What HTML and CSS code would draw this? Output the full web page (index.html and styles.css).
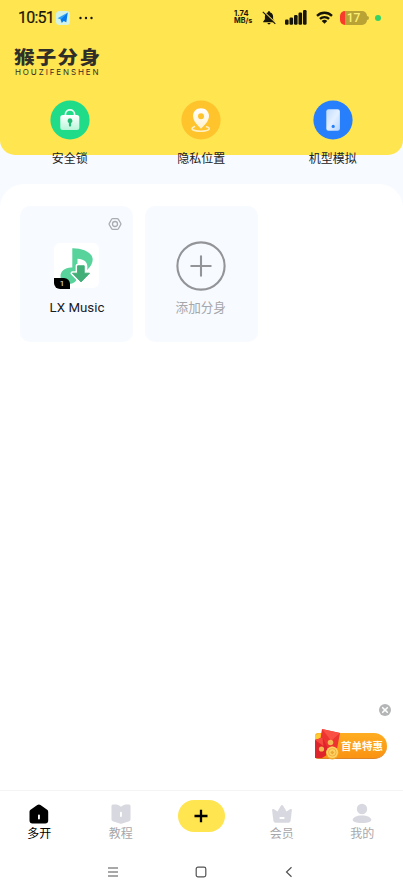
FILE: index.html
```html
<!DOCTYPE html>
<html lang="zh-CN">
<head>
<meta charset="utf-8">
<meta name="viewport" content="width=device-width, initial-scale=1">
<title>猴子分身</title>
<link rel="stylesheet" href="styles.css">
</head>
<body>
<div class="app">
  <header class="hero">
    <div class="status">
      <span class="time">10:51</span>
      <svg class="plane" width="14" height="14" viewBox="0 0 14 14"><rect width="14" height="14" rx="3.5" fill="#d3f3e6"/><path d="M11.800 1.500 1.500 7.200l3.700 1.200z" fill="#29a4fa"/><path d="M11.800 1.500 4.500 8.400l1.300 3.600 1.800-2 2.700 1.200z" fill="#087bec"/></svg>
      <svg class="dots" width="14" height="4" viewBox="0 0 14 4"><circle cx="1.500" cy="2" r="1.200"/><circle cx="7" cy="2" r="1.200"/><circle cx="12.500" cy="2" r="1.200"/></svg>
      <span class="speed"><span>1.74</span><span>MB/s</span></span>
      <svg class="bell" width="14" height="16" viewBox="0 0 14 16"><path d="M7 1.200c.8 0 1.200.5 1.200 1.200 2 .5 2.900 2.100 2.900 4.200v2.600l1.700 2.300v.8H1.200v-.8l1.700-2.300V6.600c0-2.100.9-3.700 2.900-4.200 0-.7.4-1.200 1.200-1.200zM5.500 13h3c-.2 1-.7 1.400-1.500 1.400S5.700 14 5.500 13z"/><path d="M1.600 1.400 13.900 13.200" stroke="#ffe550" stroke-width="1.200"/><path d="M.8 1.800 13.300 13.800" stroke="#17150a" stroke-width="1.100"/></svg>
      <svg class="signal" width="22" height="15" viewBox="0 0 22 15"><rect x="0" y="9.500" width="3.600" height="5.200" rx="1.200"/><rect x="4.500" y="7.500" width="3.600" height="7.200" rx="1.200"/><rect x="9" y="5" width="3.600" height="9.700" rx="1.200"/><rect x="13.500" y="2.500" width="3.600" height="12.200" rx="1.200"/><rect x="18" y="0" width="3.600" height="14.700" rx="1.200"/></svg>
      <svg class="wifi" width="17" height="13" viewBox="0 0 17 13"><g fill="none" stroke="#17150a" stroke-width="2.300"><path d="M1 4.900c4.300-4.200 10.700-4.200 15 0"/><path d="M3.900 7.900c2.600-2.500 6.600-2.500 9.200 0"/></g><path d="M5.700 9.900c1.700-1.500 3.900-1.500 5.600 0L8.500 12.800z"/></svg>
      <span class="battery"><span class="level">17</span></span>
      <span class="live"></span>
    </div>
    <div class="brand">
      <span class="brand-cn">猴子分身</span>
      <span class="brand-en">HOUZIFENSHEN</span>
    </div>
    <div class="services">
      <div class="service">
        <svg width="40" height="40" viewBox="0 0 40 40"><defs><linearGradient id="lock" x2="0" y2="1"><stop stop-color="#fff"/><stop offset="1" stop-color="#b8f5da"/></linearGradient></defs><circle cx="20" cy="20" r="19.600" fill="#20dc88"/><path d="M15.400 16v-1.600c0-6 9.200-6 9.200 0V16" fill="none" stroke="#e8fff4" stroke-width="1.700"/><rect x="10.300" y="15" width="19" height="15" rx="2.500" fill="url(#lock)"/><path d="M20 18.200a2.500 2.500 0 0 1 1.100 4.700v2.700a1.100 1.100 0 0 1-2.200 0v-2.700a2.500 2.500 0 0 1 1.100-4.700z" fill="#20bc75"/></svg>
        <span>安全锁</span>
      </div>
      <div class="service">
        <svg width="40" height="40" viewBox="0 0 40 40"><defs><linearGradient id="pin" x2="0" y2="1"><stop stop-color="#fff"/><stop offset="1" stop-color="#fff2ce"/></linearGradient></defs><circle cx="20" cy="20" r="19.600" fill="#ffc32c"/><path d="M13.500 26.500c-6 3 0 4.700 6.500 4.700 7 0 11.500-2.800 5.500-4.500" fill="none" stroke="#fff0c4" stroke-width="1.600" stroke-linecap="round"/><path fill-rule="evenodd" d="M20 8.200c4.800 0 8 3.500 8 7.800 0 5.400-5.200 9.800-8 12.800-2.800-3-8-7.400-8-12.800 0-4.300 3.200-7.800 8-7.800zm0 5a3 3 0 1 0 0 6 3 3 0 0 0 0-6z" fill="url(#pin)"/></svg>
        <span>隐私位置</span>
      </div>
      <div class="service">
        <svg width="40" height="40" viewBox="0 0 40 40"><defs><linearGradient id="phone" x2="1" y2="1"><stop stop-color="#bfdbff"/><stop offset=".5" stop-color="#e4f0ff"/><stop offset="1" stop-color="#b6d5ff"/></linearGradient></defs><circle cx="20" cy="20" r="19.600" fill="#277ffb"/><rect x="13.300" y="9.300" width="13.600" height="21.500" rx="2.300" fill="url(#phone)"/><circle cx="20.200" cy="26.400" r="1.600" fill="#277ffb"/></svg>
        <span>机型模拟</span>
      </div>
    </div>
  </header>

  <main class="sheet">
    <div class="cards">
      <div class="card">
        <svg class="gear" width="14" height="14" viewBox="0 0 14 14" fill="none" stroke="#a9adb1" stroke-linejoin="round"><path d="M4.800 1.600h4.400c.6 0 .9.200 1.200.7L12.700 6.300c.3.500.3.900 0 1.400l-2.300 4c-.3.500-.6.700-1.200.7H4.800c-.6 0-.9-.2-1.200-.7L1.300 7.700c-.3-.5-.3-.9 0-1.400l2.300-4c.3-.5.6-.7 1.200-.7z" stroke-width="1.300"/><circle cx="7" cy="7" r="2.500" stroke-width="1.300"/></svg>
        <div class="app-icon">
          <svg width="45" height="45" viewBox="0 0 45 45"><path d="M18.300 5.200C28 5 37.500 8.800 38.600 15.500c.5 4-1.600 7.500-5.600 11.500 1.500-6.500-1.500-11-9.500-11.200V33c0 5-4 8-8.800 8-4.700 0-8.200-3.200-8.200-7.700 0-5.500 5-9.300 11.800-8.800z" fill="#57d39b"/><path d="M23.600 22.800h6.600v7.400h5.300L27 38.900l-8.500-8.700h5.100z" fill="#42ae78" stroke="#fff" stroke-width="4" stroke-linejoin="round"/><path d="M23.600 22.800h6.600v7.400h5.300L27 38.900l-8.500-8.700h5.100z" fill="#42ae78" stroke="#42ae78" stroke-linejoin="round"/></svg>
          <span class="count">1</span>
        </div>
        <span class="app-name">LX Music</span>
      </div>
      <div class="card add">
        <svg width="50" height="50" viewBox="0 0 50 50" fill="none" stroke="#939497" stroke-width="2.100" stroke-linecap="round"><circle cx="25" cy="25" r="23.600"/><path d="M15.300 25h19.400M25 15.300v19.400"/></svg>
        <span>添加分身</span>
      </div>
    </div>
    <div class="promo">
      <svg class="close" width="12" height="12" viewBox="0 0 12 12"><circle cx="6" cy="6" r="6" fill="#b4b5b6"/><path d="m3.700 3.700 4.600 4.600m0-4.600L3.700 8.300" stroke="#fff" stroke-width="1.600" stroke-linecap="round"/></svg>
      <div class="offer">
        <svg class="packets" width="28" height="30" viewBox="0 0 28 30"><path d="M0 6.500 4.500 4 8 10H0z" fill="#fc3"/><path d="m7 0 18 4-3.500 18.500L4 18z" fill="#ed3430"/><path d="m7 0 18 4-8.800 7.800z" fill="#fa5043"/><path d="m0 11 7.500-2.500L15 24l-8 5H0z" fill="#df242b"/><path d="m0 11 7.500-2.500L8.500 17z" fill="#f64a3f"/><circle cx="15.500" cy="13.500" r="2.800" fill="#f3b851"/><circle cx="6.500" cy="20" r="2.600" fill="#f3b851"/><circle cx="17.300" cy="24" r="6.400" fill="#efa629"/><circle cx="17.300" cy="23.300" r="5.800" fill="#ffd263"/><circle cx="17.300" cy="23.300" r="3.800" fill="none" stroke="#eda733" stroke-width=".8"/><path d="m15.300 23.500 2-2 2 2-2 2z" fill="#eda733"/></svg>
        <span>首单特惠</span>
      </div>
    </div>
  </main>

  <nav class="tabs">
    <div class="tab active">
      <svg width="20" height="20" viewBox="0 0 20 20"><path d="M8.300 1.100c1-.7 2.200-.7 3.200 0L17.800 5.500c1 .7 1.400 1.400 1.400 2.500v8.400c0 2-1 3-3 3H3.500c-2 0-3-1-3-3V8c0-1.100.4-1.800 1.400-2.500z"/><rect x="9" y="10.500" width="1.900" height="4.900" rx=".9" fill="#fff"/></svg>
      <span>多开</span>
    </div>
    <div class="tab">
      <svg width="20" height="20" viewBox="0 0 20 20"><path d="M2 .6c2.600-.4 5.800 0 8 2.100C12.200.6 15.400.2 18 .6c1 .1 1.500.7 1.500 1.700v13c0 1-.4 1.500-1.300 1.900l-7 2.200c-.8.300-1.600.3-2.400 0l-7-2.200C.9 16.800.5 16.300.5 15.300v-13C.5 1.300 1 .7 2 .6z"/><rect x="9" y="7.800" width="1.900" height="5.200" rx=".9" fill="#fff"/></svg>
      <span>教程</span>
    </div>
    <div class="tab-plus"><svg width="14" height="14" viewBox="0 0 14 14"><path d="M7 .7v12.600M.5 7h13" stroke="#000" stroke-width="2.300"/></svg></div>
    <div class="tab">
      <svg width="20" height="20" viewBox="0 0 20 20"><path d="M.1 6.200c0-1.300 1-1.600 1.900-1L5.500 7.400 9 1.600c.5-.9 1.500-.9 2 0l3.500 5.800L18 5.200c.9-.6 2-.3 1.900 1L18.600 16.800c-.2 1.100-.8 1.900-2 1.900H3.400c-1.200 0-1.800-.8-2-1.900z"/><rect x="7.400" y="13" width="5.200" height="1.900" rx=".9" fill="#fff"/></svg>
      <span>会员</span>
    </div>
    <div class="tab">
      <svg width="20" height="20" viewBox="0 0 20 20"><circle cx="10" cy="5" r="5.200"/><path d="M10 11.500c5.400 0 9.300 2 9.300 4.300 0 2-3 3.200-9.300 3.200s-9.300-1.200-9.300-3.200c0-2.300 3.900-4.300 9.300-4.300z"/></svg>
      <span>我的</span>
    </div>
  </nav>
  <div class="system">
    <svg width="12" height="12" viewBox="0 0 12 12"><path d="M1 2h10M1 6h10M1 10h10"/></svg>
    <svg width="12" height="12" viewBox="0 0 12 12"><rect x="1.200" y="1.200" width="9.600" height="9.600" rx="1.800"/></svg>
    <svg width="12" height="12" viewBox="0 0 12 12"><path d="M8.500 1.200 3.500 6l5 4.800"/></svg>
  </div>
</div>
</body>
</html>
```
FILE: styles.css
```css
* { box-sizing: border-box; }
body { margin: 0; font-family: Roboto, "Noto Sans CJK SC", sans-serif; }
svg { display: block; flex: none; overflow: visible; }
.app { height: 884px; display: flex; flex-direction: column; overflow: hidden; background: #f7faff; }

.hero { height: 155px; flex: none; background: #ffe550; border-radius: 0 0 15px 15px; }
.status { display: flex; align-items: center; height: 35px; padding-left: 18px; fill: #17150a; }
.time { width: 36px; font-size: 16px; letter-spacing: -.8px; line-height: 20px; color: #17150a; white-space: nowrap; -webkit-text-stroke: .2px #17150a; }
.plane { margin-left: 2px; }
.dots { margin-left: 9px; }
.speed { display: flex; flex-direction: column; gap: 1px; width: 21px; margin-left: 141px; font: 700 7.200px/7px Inter, sans-serif; color: #17150a; }
.speed span { height: 6px; line-height: 6px; }
.speed span:first-child { font-size: 7.600px; }
.bell { margin-left: 7px; }
.signal { margin-left: 9px; }
.wifi { margin-left: 9px; }
.battery { position: relative; width: 27px; height: 14px; margin-left: 7px; border-radius: 5px; background: linear-gradient(90deg, #f83c2c 5px, #b9a334 5px); }
.battery::after { content: ""; position: absolute; right: -2px; top: 5px; width: 2px; height: 4px; border-radius: 0 2px 2px 0; background: #b9a334; }
.level { display: block; text-align: center; font: 500 12px/14px Roboto, sans-serif; color: #fff075; }
.live { width: 6px; height: 6px; margin-left: 8px; border-radius: 50%; background: #35d267; }

.brand { display: flex; flex-direction: column; height: 65px; padding: 11px 0 0 14px; color: #302e28; }
.brand-cn { height: 20px; font: 900 20.500px/20px "Noto Sans CJK SC", sans-serif; letter-spacing: 1.300px; transform: scaleY(.88); }
.brand-en { font: 400 8px/8px Inter, sans-serif; letter-spacing: 1.900px; margin-top: 2px; padding-left: 1px; }
.services { display: grid; grid-template-columns: repeat(3, 131.500px); justify-content: center; margin: -.5px .5px 0 0; }
.service { display: flex; flex-direction: column; align-items: center; gap: 11.500px; font-size: 12px; line-height: 17px; color: #202124; }

.sheet { flex: 1; margin-top: 29px; padding: 22px 20px 0; display: flex; flex-direction: column; background: #fff; border-radius: 24px 24px 0 0; }
.cards { display: flex; gap: 11.500px; }
.card { position: relative; width: 113px; height: 136px; padding-top: 37px; display: flex; flex-direction: column; align-items: center; background: #f7faff; border-radius: 10px; }
.gear { position: absolute; top: 11px; right: 11px; }
.app-icon { position: relative; width: 45px; height: 45px; background: #fff; border-radius: 6px; }
.count { position: absolute; left: 0; bottom: -1px; width: 16px; height: 11px; background: #000; border-radius: 0 6px 0 6px; color: #fff; font-size: 8px; line-height: 11px; text-align: center; }
.app-name { margin: 11px 0 0 1px; font: 400 13.300px/18px Roboto, sans-serif; color: #1b1c1f; }
.add { padding-top: 35px; font-size: 12.600px; line-height: 18px; color: #a6a7aa; }
.add svg { margin-right: .5px; }
.add span { margin: 7.500px .5px 0 0; }

.promo { margin: auto -8px 31px auto; width: 77px; display: flex; flex-direction: column; align-items: flex-end; gap: 17px; }
.offer { position: relative; width: 72px; height: 26px; margin-right: 4px; padding-left: 26px; border-radius: 3px 13px 13px 3px; background: linear-gradient(#ffad22, #fa9312); border-bottom: 1px solid #dc8428; color: #fffdf2; font-size: 10.500px; font-weight: 700; line-height: 27px; white-space: nowrap; }
.packets { position: absolute; left: 0; bottom: -1px; }

.tabs { height: 70px; flex: none; display: grid; grid-template-columns: repeat(5, 1fr); justify-items: center; align-items: start; padding: 10px .5px 0 0; background: #fff; border-top: 1px solid #f4f4f5; }
.tab { display: flex; flex-direction: column; align-items: center; padding-top: 2.500px; fill: #d8d8e0; color: #a7a7aa; font-size: 12px; line-height: 18px; }
.tab span { margin-top: 1.500px; }
.tab.active { fill: #000; color: #000; margin-right: 2px; }
.tab-plus { width: 47px; height: 32px; margin-top: -1px; display: grid; place-items: center; border-radius: 16px; background: #ffe550; }
.system { height: 24px; flex: none; display: flex; justify-content: center; gap: 76px; padding: 6px 2px 0 0; background: #fff; fill: none; stroke: #535353; stroke-width: 1.200; }
```
